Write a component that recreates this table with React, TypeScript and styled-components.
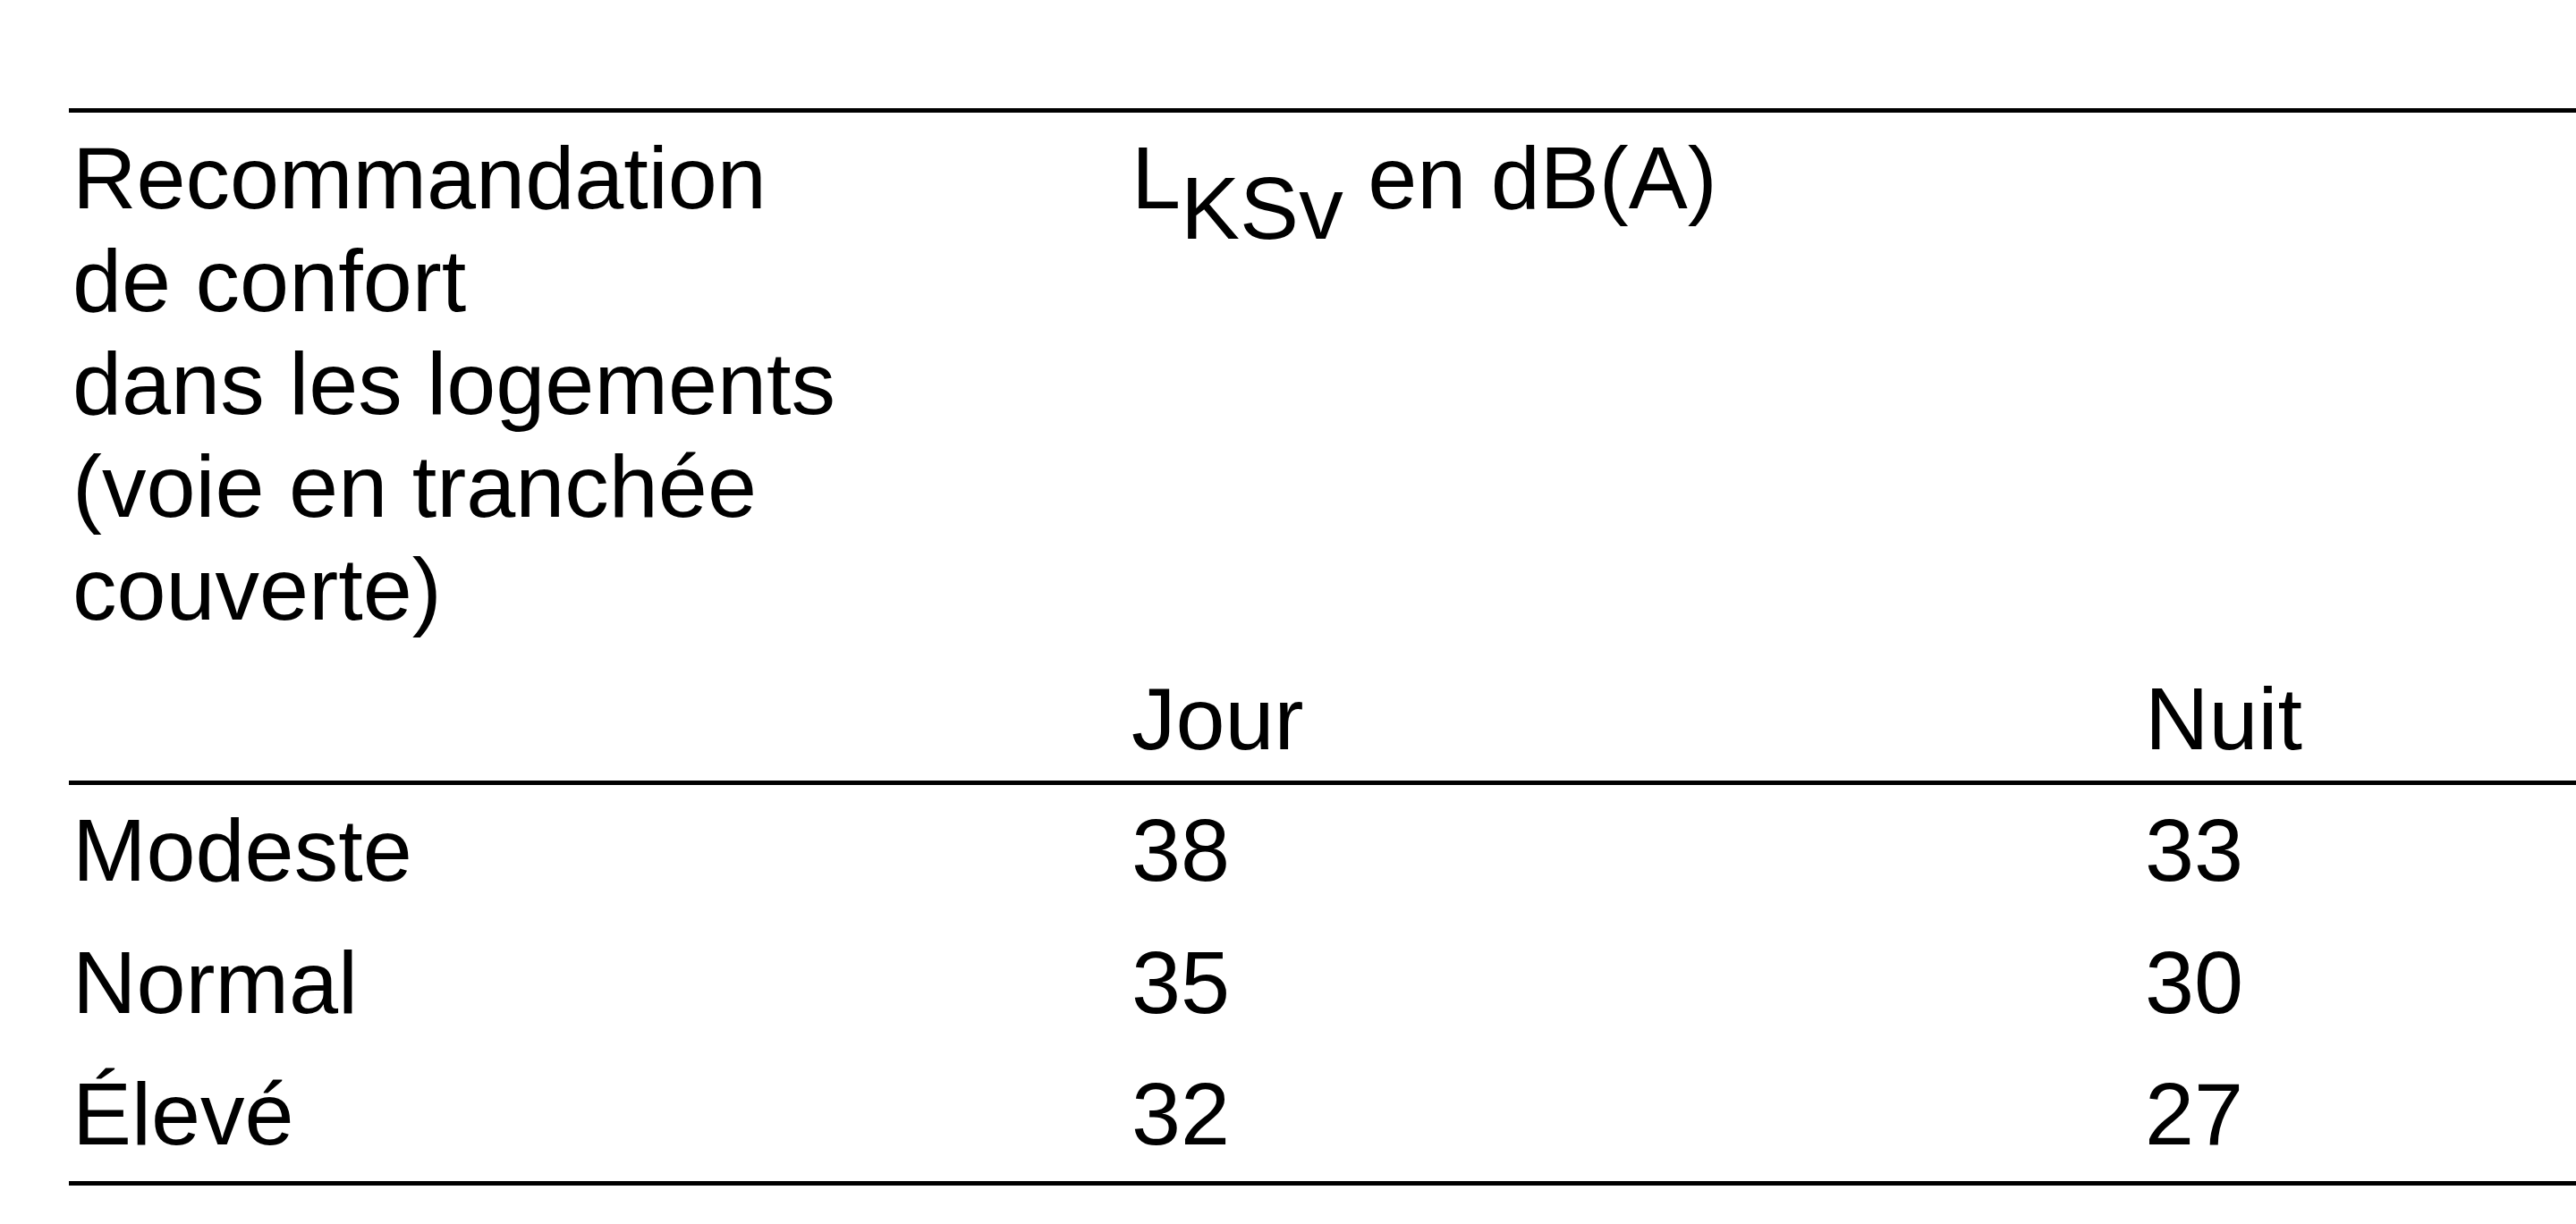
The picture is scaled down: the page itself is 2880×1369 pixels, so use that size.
import React from "react";
import styled, { createGlobalStyle } from "styled-components";

const GlobalStyle = createGlobalStyle`
  html, body {
    margin: 0;
    padding: 0;
    background: #ffffff;
  }
  body {
    font-family: "Liberation Sans", Arial, Helvetica, sans-serif;
    color: #000000;
  }
`;

const Page = styled.main`
  padding: 121px 0 0 77px;
  box-sizing: border-box;
  width: 2880px;
`;

const Table = styled.table`
  width: 100%;
  table-layout: fixed;
  border-collapse: separate;
  border-spacing: 0;
  border-top: 5px solid #000;
  border-bottom: 5px solid #000;
  font-size: 99px;
  line-height: 115px;
  color: #000;
`;

const Col = styled.col<{ $width?: number }>`
  width: ${(p) => (p.$width ? `${p.$width}px` : "auto")};
`;

const HeadCell = styled.th<{ $pb: number; $rule?: boolean }>`
  text-align: left;
  font-weight: 400;
  vertical-align: top;
  padding: 15px 0 ${(p) => p.$pb}px 4px;
  border-bottom: ${(p) => (p.$rule ? "5px solid #000" : "none")};
  white-space: nowrap;
`;

const Cell = styled.td`
  text-align: left;
  vertical-align: top;
  padding: 15px 0 17.5px 4px;
  white-space: nowrap;
`;

const Sub = styled.span`
  vertical-align: -34px;
  font-size: 99px;
`;

const rows = [
  { label: "Modeste", day: 38, night: 33 },
  { label: "Normal", day: 35, night: 30 },
  { label: "Élevé", day: 32, night: 27 },
];

export default function App() {
  return (
    <>
      <GlobalStyle />
      <Page>
        <Table>
          <colgroup>
            <Col $width={1184} />
            <Col $width={1133} />
            <Col />
          </colgroup>
          <thead>
            <tr>
              <HeadCell $pb={15}>
                Recommandation
                <br />
                de confort
                <br />
                dans les logements
                <br />
                (voie en tranchée
                <br />
                couverte)
              </HeadCell>
              <HeadCell $pb={15} colSpan={2}>
                L<Sub>KSv</Sub> en dB(A)
              </HeadCell>
            </tr>
            <tr>
              <HeadCell $pb={12} $rule />
              <HeadCell $pb={12} $rule>
                Jour
              </HeadCell>
              <HeadCell $pb={12} $rule>
                Nuit
              </HeadCell>
            </tr>
          </thead>
          <tbody>
            {rows.map((r) => (
              <tr key={r.label}>
                <Cell>{r.label}</Cell>
                <Cell>{r.day}</Cell>
                <Cell>{r.night}</Cell>
              </tr>
            ))}
          </tbody>
        </Table>
      </Page>
    </>
  );
}
